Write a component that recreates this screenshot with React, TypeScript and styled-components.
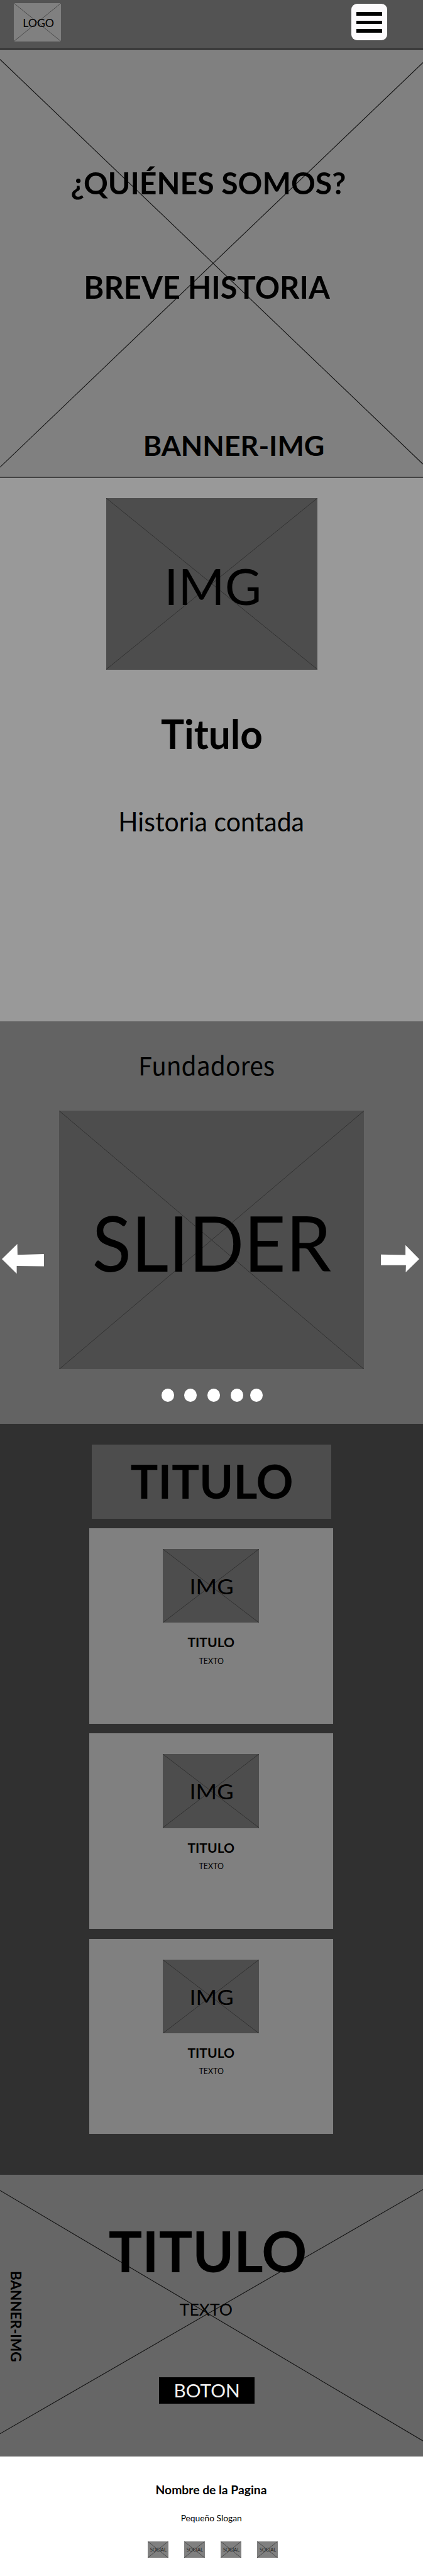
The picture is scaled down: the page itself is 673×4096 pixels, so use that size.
import React from "react";
import styled, { createGlobalStyle } from "styled-components";

const GlobalStyle = createGlobalStyle`
  body {
    margin: 0;
    background: #fff;
    color: #000;
    font-family: Lato, "Liberation Sans", sans-serif;
  }
`;

const Page = styled.div`
  width: 673px;
  height: 4096px;
  overflow: hidden;
  display: flex;
  flex-direction: column;
`;

/* One line of copy. $shift nudges it off the centre of its column. */
const Label = styled.div<{
  $size: number;
  $bold?: boolean;
  $mt?: number;
  $shift?: number;
  $stretch?: number;
  $color?: string;
}>`
  position: relative;
  flex: none;
  font-size: ${(p) => p.$size}px;
  font-weight: ${(p) => (p.$bold ? 700 : 400)};
  line-height: ${(p) => p.$size}px;
  white-space: nowrap;
  color: ${(p) => p.$color ?? "#000"};
  margin: ${(p) => p.$mt ?? 0}px 0 0 ${(p) => 2 * (p.$shift ?? 0)}px;
  transform: scaleX(${(p) => p.$stretch ?? 1});
`;

const SansLabel = styled(Label)`
  font-family: "Noto Sans CJK SC", sans-serif;
`;

const Header = styled.header`
  flex: none;
  box-sizing: border-box;
  height: 79px;
  padding: 5.4px 56.7px 0 21.9px;
  display: flex;
  justify-content: space-between;
  align-items: flex-start;
  background: #535353;
  border-bottom: 2px solid #2c2c2c;
`;

const Box = styled.div<{ $w: number; $h: number; $pad: number; $light?: boolean }>`
  position: relative;
  flex: none;
  box-sizing: border-box;
  width: ${(p) => p.$w}px;
  height: ${(p) => p.$h}px;
  padding-top: ${(p) => p.$pad}px;
  display: flex;
  flex-direction: column;
  align-items: center;
  background: ${(p) => (p.$light ? "#808080" : "#4d4d4d")};
`;

const CrossSvg = styled.svg`
  position: absolute;
  inset: 0;
  width: 100%;
  height: 100%;
`;

type CrossProps = {
  w: number;
  h: number;
  color?: string;
  weight?: number;
  ends?: [number, number, number, number];
};

/* ends: left start, right end, right start, left end of the two diagonals */
function Cross({ w, h, color = "#2b2b2b", weight = 0.8, ends = [0, h, 0, h] }: CrossProps) {
  return (
    <CrossSvg viewBox={`0 0 ${w} ${h}`} preserveAspectRatio="none" aria-hidden>
      <path
        d={`M0 ${ends[0]}L${w} ${ends[1]}M${w} ${ends[2]}L0 ${ends[3]}`}
        stroke={color}
        strokeWidth={weight}
        fill="none"
      />
    </CrossSvg>
  );
}

const MenuButton = styled.button`
  width: 57.5px;
  height: 58px;
  margin: 0.9px 0 0;
  padding: 0.6px 0 0;
  border: 0;
  border-radius: 9px;
  background: #fcfafc;
  display: flex;
  flex-direction: column;
  align-items: center;
  justify-content: center;
  gap: 7.8px;
`;

const MenuBar = styled.span`
  width: 41.6px;
  height: 5.6px;
  background: #000;
`;

const Banner = styled.section`
  position: relative;
  flex: none;
  box-sizing: border-box;
  height: 681px;
  padding-top: 188px;
  display: flex;
  flex-direction: column;
  align-items: center;
  background: #808080;
  border-bottom: 2px solid #434343;
`;

const History = styled.section`
  flex: none;
  box-sizing: border-box;
  height: 864px;
  padding-top: 32.3px;
  display: flex;
  flex-direction: column;
  align-items: center;
  background: #999;
`;

const Founders = styled.section`
  flex: none;
  box-sizing: border-box;
  height: 640px;
  padding-top: 48.5px;
  display: flex;
  flex-direction: column;
  align-items: center;
  background: #636363;
`;

const SliderRow = styled.div`
  width: 673px;
  height: 411.3px;
  margin-top: 53.1px;
  display: grid;
  grid-template-columns: 93.6px 485.4px 94px;
`;

const Arrow = styled.svg<{ $left: number }>`
  display: block;
  width: 67.1px;
  height: 47.4px;
  margin: 212.4px 0 0 ${(p) => p.$left}px;
  fill: #fff;
`;

const Dots = styled.div`
  align-self: flex-start;
  display: flex;
  margin: 30.9px 0 0 256.5px;
`;

const Dot = styled.span<{ $gap: number }>`
  width: 20.2px;
  height: 20.7px;
  margin-left: ${(p) => p.$gap}px;
  border-radius: 50%;
  background: #fff;
`;

const Catalog = styled.section`
  flex: none;
  box-sizing: border-box;
  height: 1194px;
  padding-top: 33px;
  display: flex;
  flex-direction: column;
  align-items: center;
  background: #303030;
`;

const CardList = styled.div`
  display: flex;
  flex-direction: column;
  gap: 15.9px;
  margin: 15.4px 1.4px 0 0;
`;

const Card = styled.article`
  box-sizing: border-box;
  width: 388px;
  height: 310.4px;
  padding-top: 33px;
  display: flex;
  flex-direction: column;
  align-items: center;
  background: #808080;
`;

const CallToAction = styled.section`
  position: relative;
  flex: none;
  box-sizing: border-box;
  height: 448px;
  padding-top: 74.7px;
  display: flex;
  flex-direction: column;
  align-items: center;
  background: #666;
`;

const ActionButton = styled.button`
  position: relative;
  box-sizing: border-box;
  width: 152px;
  height: 42.7px;
  margin: 93.8px 14.6px 0 0;
  padding: 7.2px 0 0;
  border: 0;
  font-family: inherit;
  background: #000;
  display: flex;
  flex-direction: column;
  align-items: center;
  justify-content: flex-start;
`;

const SideLabel = styled.div`
  position: absolute;
  left: 13.4px;
  top: 153.3px;
  writing-mode: vertical-rl;
  font-size: 22.45px;
  line-height: 22.45px;
  font-weight: 700;
  white-space: nowrap;
`;

const Footer = styled.footer`
  flex: none;
  box-sizing: border-box;
  height: 190px;
  padding-top: 42.6px;
  display: flex;
  flex-direction: column;
  align-items: center;
  background: #fff;
`;

const Socials = styled.div`
  display: flex;
  gap: 25.5px;
  margin: 30.2px 0 0 4.2px;
`;

export default function App() {
  return (
    <>
      <GlobalStyle />
      <Page>
        <Header>
          <Box $w={75.1} $h={60.8} $pad={22.2} $light>
            <Cross w={75.1} h={60.8} color="#3c3c3c" />
            <Label $size={17.75} $shift={1.7}>LOGO</Label>
          </Box>
          <MenuButton aria-label="Menu">
            <MenuBar />
            <MenuBar />
            <MenuBar />
          </MenuButton>
        </Header>

        <Banner>
          <Cross w={673} h={679} color="#111" weight={1.1} ends={[15.4, 659.1, 20.4, 663.9]} />
          <Label as="h1" $size={48.1} $bold $shift={-5.15}>¿QUIÉNES SOMOS?</Label>
          <Label as="h2" $size={48.8} $bold $mt={116.8} $shift={-7.4}>BREVE HISTORIA</Label>
          <Label $size={44.8} $bold $mt={205.4} $shift={35.5}>BANNER-IMG</Label>
        </Banner>

        <History>
          <Box $w={336} $h={272.4} $pad={99.4}>
            <Cross w={336} h={272.4} />
            <Label $size={79} $shift={2.5} $stretch={1.01}>IMG</Label>
          </Box>
          <Label as="h2" $size={65.9} $bold $mt={68.1} $stretch={0.942}>Titulo</Label>
          <Label $size={43.06} $mt={85} $stretch={0.953}>Historia contada</Label>
        </History>

        <Founders>
          <SansLabel $size={40.2} $shift={-7.9} $stretch={0.97}>Fundadores</SansLabel>
          <SliderRow>
            <Arrow $left={3} viewBox="0 0 67.1 47.4" aria-label="Anterior">
              <path d="M0 23.9L24.5 0L24.9 17.3L67 16.1V35.6L23.6 35V47.3Z" />
            </Arrow>
            <Box $w={485.4} $h={411.3} $pad={149.1}>
              <Cross w={485.4} h={411.3} />
              <Label $size={121.6} $shift={0.1} $stretch={0.948}>SLIDER</Label>
            </Box>
            <Arrow $left={26.6} viewBox="0 0 67.1 47.4" aria-label="Siguiente">
              <path d="M0 16.7L39.1 17.6V1.8L61 23.9L39.5 44.9L39.9 33.8H0Z" />
            </Arrow>
          </SliderRow>
          <Dots>
            {[0, 16, 17.3, 16.8, 10.7].map((gap, i) => (
              <Dot key={i} $gap={gap} />
            ))}
          </Dots>
        </Founders>

        <Catalog>
          <Box $w={380.2} $h={117.8} $pad={19.9}>
            <Label as="h2" $size={75.2} $bold $shift={0.15} $stretch={0.973}>TITULO</Label>
          </Box>
          <CardList>
            {[1, 2, 3].map((n) => (
              <Card key={n}>
                <Box $w={153} $h={117.2} $pad={42.9}>
                  <Cross w={153} h={117.2} />
                  <Label $size={33.6} $shift={1} $stretch={1.08}>IMG</Label>
                </Box>
                <Label as="h3" $size={20.2} $bold $mt={20.9} $shift={0.3} $stretch={1.045}>TITULO</Label>
                <Label $size={12.4} $mt={14.4} $shift={0.4}>TEXTO</Label>
              </Card>
            ))}
          </CardList>
        </Catalog>

        <CallToAction>
          <Cross w={673} h={448} color="#111" weight={1.1} ends={[24.9, 423.2, 23.4, 411.8]} />
          <Label as="h2" $size={90.7} $bold $shift={-6} $stretch={0.983}>TITULO</Label>
          <Label $size={26.5} $mt={36} $shift={-8.6}>TEXTO</Label>
          <ActionButton>
            <Label as="span" $size={28.9} $shift={-0.3} $stretch={1.029} $color="#f0f0f0">BOTON</Label>
          </ActionButton>
          <SideLabel>BANNER-IMG</SideLabel>
        </CallToAction>

        <Footer>
          <Label $size={19.3} $bold $shift={-0.5}>Nombre de la Pagina</Label>
          <Label $size={13.8} $mt={29.3} $shift={-0.3}>Pequeño Slogan</Label>
          <Socials>
            {[1, 2, 3, 4].map((n) => (
              <Box key={n} $w={32.6} $h={26} $pad={9.5} $light>
                <Cross w={32.6} h={26} color="#3c3c3c" />
                <Label $size={7.5} $shift={0.3} $color="#1a1a1a">SOCIAL</Label>
              </Box>
            ))}
          </Socials>
        </Footer>
      </Page>
    </>
  );
}
